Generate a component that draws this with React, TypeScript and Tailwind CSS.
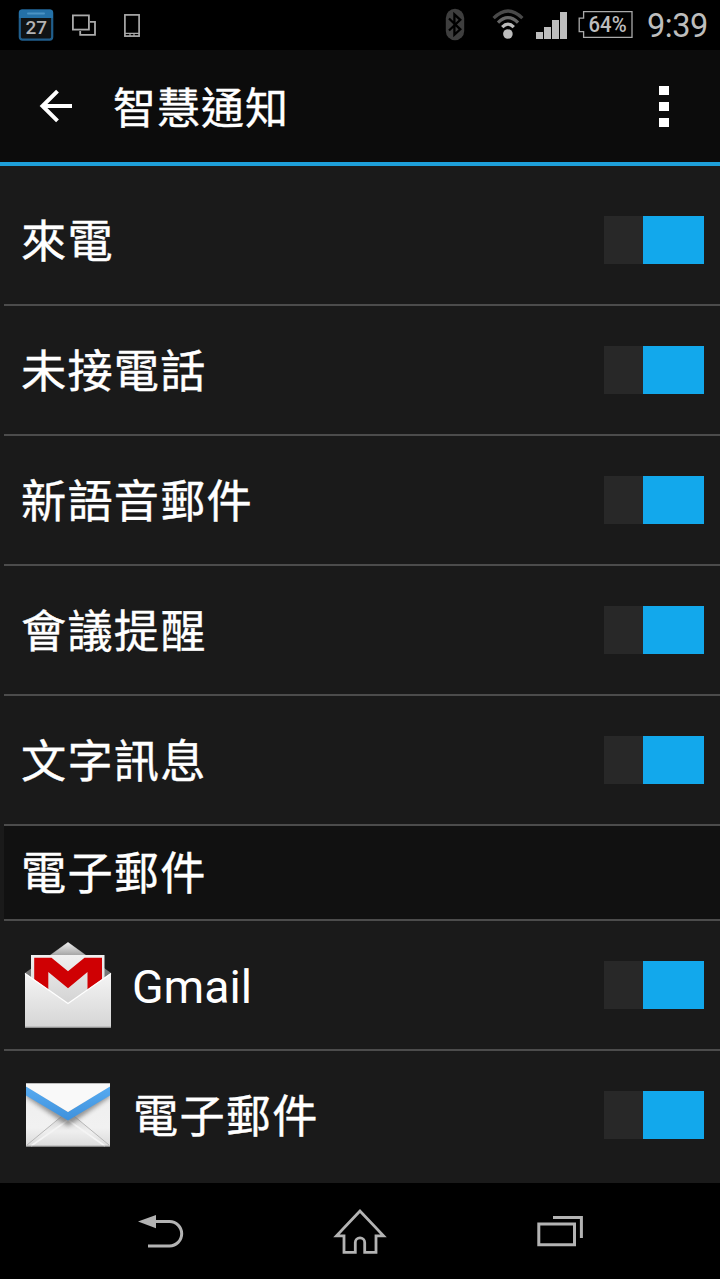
import type { ReactNode } from "react";

function CalendarIcon() {
  return (
    <svg width="36" height="32" viewBox="0 0 36 32">
      <rect x="1.8" y="1.6" width="32.4" height="29" rx="2.5" fill="#101314" stroke="#205e8c" strokeWidth="2.2" />
      <path d="M1 9V3.5Q1 .5 4 .5H32Q35 .5 35 3.5V9Z" fill="#2471a8" />
      <path d="M10 4.5H26" stroke="#4b93c4" strokeWidth="2" strokeLinecap="round" />
      <text x="18.2" y="25.4" textAnchor="middle" fontSize="19" textLength="21.5" lengthAdjust="spacing" className="font-[Roboto,sans-serif] font-medium" fill="#b4b4b4">27</text>
    </svg>
  );
}

function StatusBar() {
  return (
    <div className="flex h-[50px] shrink-0 items-start bg-black font-[Roboto,sans-serif]">
      <div className="pt-[9px] pl-[18px]"><CalendarIcon /></div>
      <svg className="mt-[14px] ml-[18px]" width="24" height="23" viewBox="0 0 24 23" fill="none" stroke="#aaa" strokeWidth="1.8">
        <rect x=".9" y="1.4" width="16" height="14.2" />
        <path d="M18 7.8H23V20.8H8.2V17" />
      </svg>
      <svg className="mt-[13px] ml-[27px]" width="18" height="25" viewBox="0 0 18 25" fill="none" stroke="#aaa" strokeWidth="1.7">
        <rect x="1.9" y="1.9" width="14.2" height="21.2" />
        <path d="M2 20.3H16M7 20V23M11 20V23" strokeWidth="1.2" />
      </svg>
      <svg className="mt-2 ml-auto" width="20" height="33" viewBox="0 0 20 33">
        <rect x=".8" y=".8" width="18.4" height="31.4" rx="9.2" fill="#3e3e3e" />
        <path d="M4 10.5L15.3 21.3L9.4 26.7V6.3L15.3 11.8L4 22.5" fill="none" stroke="#000" strokeWidth="2.3" />
      </svg>
      <svg className="mt-[9px] ml-[27px]" width="32" height="31" viewBox="0 0 32 31" fill="none">
        <path d="M1.6 9.2Q16-5.2 30.4 9.2" stroke="#494949" strokeWidth="3.2" />
        <path d="M6 13.6Q16 3.6 26 13.6" stroke="#666" strokeWidth="3.2" />
        <path d="M10.2 18.2Q16 12.2 21.8 18.2" stroke="#bbb" strokeWidth="3.2" />
        <circle cx="15.9" cy="25" r="4.8" fill="#bdbdbd" />
      </svg>
      <svg className="mt-3 ml-[12px]" width="31" height="27" fill="#bdbdbd">
        <path d="M0 20H7V27H0ZM8 15H15V27H8ZM16 8H23V27H16ZM24 0H31V27H24Z" />
      </svg>
      <svg className="mt-[11px] ml-[11px]" width="55" height="27" viewBox="0 0 55 27">
        <path d="M5.6.7H54V26.3H5.6V20.6H1.2V7.2H5.6Z" fill="none" stroke="#aaa" strokeWidth="1.3" />
        <text x="29.6" y="21" textAnchor="middle" fontSize="21.5" className="font-[Roboto,sans-serif] font-medium" fill="#bdbdbd" textLength="38" lengthAdjust="spacingAndGlyphs">64%</text>
      </svg>
      <span className="mt-[7px] mr-3 ml-[13px] w-[62px] text-right text-[32.5px] leading-[39px] tracking-[-0.4px] text-[#bdbdbd]">9:39</span>
    </div>
  );
}

function Header() {
  return (
    <header className="flex h-[116px] shrink-0 items-center border-b-4 border-[#1e9fd9] bg-[#0c0c0c]">
      <svg className="ml-[39px]" width="34" height="34" viewBox="0 0 34 34" fill="none" stroke="#fff" strokeWidth="4">
        <path d="M33 17H4M18.5 2.2L3.5 17L18.5 31.8" />
      </svg>
      <h1 className="ml-10 pt-[5px] text-[43px] leading-[60px] tracking-[1px] [-webkit-text-stroke:0.4px_white]">智慧通知</h1>
      <div className="mr-[51px] ml-auto flex flex-col gap-[7px]">
        <i className="h-[9px] w-[10px] bg-white" />
        <i className="h-[9px] w-[10px] bg-white" />
        <i className="h-[9px] w-[10px] bg-white" />
      </div>
    </header>
  );
}

function GmailIcon() {
  return (
    <svg width="88" height="90" viewBox="0 0 88 90">
      <defs>
        <linearGradient id="front" x2="0" y2="1"><stop stopColor="#f5f5f5" /><stop offset="1" stopColor="#d5d5d5" /></linearGradient>
        <linearGradient id="sheet" x2="0" y2="1"><stop stopColor="#f0f0f0" /><stop offset="1" stopColor="#cfcfcf" /></linearGradient>
        <linearGradient id="peak" x2="0" y2="1"><stop stopColor="#f0f0f0" /><stop offset="1" stopColor="#9a9a9a" /></linearGradient>
      </defs>
      <path d="M1 33L44 2L87 33V60H1Z" fill="#777" />
      <path d="M24 17L44 2.2L64 17Z" fill="url(#peak)" />
      <path d="M7 15H80.5V70H7Z" fill="url(#sheet)" />
      <path d="M10.2 17.7H27.5L44 31.3L60.5 17.7H78V56H63.5V32L44 48.3L24.3 32V56H10.2Z" fill="#cf0003" />
      <path d="M1 33L44 63.5L87 33V87.5H1Z" fill="url(#front)" />
      <path d="M1 33.5L44 63.5L87 33.5" fill="none" stroke="#fff" strokeWidth="1.3" />
      <path d="M1 87H87" stroke="#aaa" />
    </svg>
  );
}

function EmailIcon() {
  return (
    <svg width="88" height="66" viewBox="0 0 88 66">
      <defs>
        <linearGradient id="mail" x2="0" y2="1"><stop stopColor="#eee" /><stop offset=".7" stopColor="#f1f1f1" /><stop offset="1" stopColor="#d9d9d9" /></linearGradient>
        <linearGradient id="fold" x2="0" y2="1"><stop stopColor="#d0d0d0" /><stop offset=".5" stopColor="#efefef" /><stop offset="1" stopColor="#dcdcdc" /></linearGradient>
        <linearGradient id="blue" x2="0" y2="1"><stop stopColor="#57abf1" /><stop offset="1" stopColor="#3f91dc" /></linearGradient>
        <filter id="soft" x="-20%" y="-20%" width="140%" height="150%"><feGaussianBlur stdDeviation="2.2" /></filter>
        <clipPath id="mailEdge"><path d="M2 1.5H86V64.5H2Z" /></clipPath>
      </defs>
      <g clipPath="url(#mailEdge)">
        <path d="M2 1H86V65H2Z" fill="url(#mail)" />
        <path d="M2 64L38 34H50L86 64" fill="url(#fold)" />
        <path d="M7 64L44 38L81 64" fill="none" stroke="#f4f4f4" strokeWidth="1.6" />
        <path d="M3 63L38 34M85 63L50 34" stroke="#b7b7b7" strokeWidth="1" fill="none" />
        <path d="M2 15L44 44L86 15V5H2Z" fill="#666" opacity=".65" filter="url(#soft)" />
        <path d="M2 4V13.5L44 38.5L86 13.5V4L44 30Z" fill="url(#blue)" />
        <path d="M2 1H86V4.5L44 30L2 4.5Z" fill="#f9f9f9" />
        <path d="M2 64H86" stroke="#aaa" />
      </g>
    </svg>
  );
}

function Switch() {
  return (
    <button role="switch" aria-checked="true" className="mr-4 ml-auto flex h-12 w-[100px] justify-end bg-[#282828]">
      <span className="h-12 w-[61px] bg-[#12a8ec]" />
    </button>
  );
}

function Row({ label, icon, latin, last }: { label: string; icon?: ReactNode; latin?: boolean; last?: boolean }) {
  return (
    <li className={last ? "ml-1 flex h-[132px] items-center pb-1" : "ml-1 flex h-[130px] items-center border-b-2 border-[#4c4c4c]"}>
      {icon && <div className="mr-1 ml-5 w-[88px] shrink-0">{icon}</div>}
      <span className={latin ? "ml-4 pt-1 text-[46.4px]" : "ml-[17px] pt-[5px] tracking-[1.2px] [-webkit-text-stroke:0.4px_white]"}>{label}</span>
      <Switch />
    </li>
  );
}

function NavBar() {
  return (
    <nav className="flex h-24 shrink-0 items-start bg-black">
      <svg className="mt-[30px] ml-[138px]" width="47" height="36" viewBox="0 0 47 36">
        <path d="M17 8.6H31.5A12.2 12.2 0 0 1 31.5 33H10" fill="none" stroke="#b3b3b3" strokeWidth="3" />
        <path d="M0 8.6L18 2V15.2Z" fill="#b3b3b3" />
      </svg>
      <svg className="mt-[25px] ml-[148px]" width="54" height="48" viewBox="0 0 54 48" fill="none" stroke="#b3b3b3" strokeWidth="2.8">
        <path d="M27 3L3.5 27.8H11V44.4H22.3V34.5A4.7 4.7 0 0 1 31.7 34.5V44.4H43V27.8H50.5Z" />
      </svg>
      <svg className="mt-[32px] ml-[150px]" width="48" height="34" viewBox="0 0 48 34" fill="none" stroke="#b3b3b3" strokeWidth="3">
        <path d="M1.8 9H37.5V29.8H1.8ZM16 2.5H44.4V23" />
      </svg>
    </nav>
  );
}

export default function App() {
  return (
    <div className="flex h-[1279px] w-[720px] flex-col overflow-hidden bg-[#1a1a1a] font-[Roboto,'Noto_Sans_CJK_TC',sans-serif] text-white">
      <StatusBar />
      <Header />
      <ul className="flex h-[1017px] shrink-0 flex-col pt-[10px] text-[45.2px] leading-[64px]">
        <Row label="來電" />
        <Row label="未接電話" />
        <Row label="新語音郵件" />
        <Row label="會議提醒" />
        <Row label="文字訊息" />
        <li className="ml-1 flex h-[95px] items-center border-b-2 border-[#4c4c4c] bg-[#111] pt-[5px] pl-[17px] tracking-[1.2px] [-webkit-text-stroke:0.4px_white]">電子郵件</li>
        <Row label="Gmail" icon={<GmailIcon />} latin />
        <Row label="電子郵件" icon={<EmailIcon />} last />
      </ul>
      <NavBar />
    </div>
  );
}
